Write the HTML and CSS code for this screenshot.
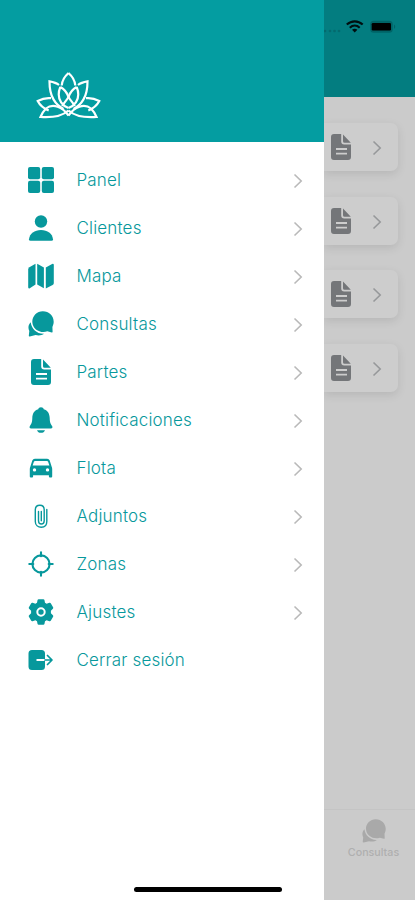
FILE: index.html
```html
<!DOCTYPE html>
<html lang="es">
<head>
<meta charset="utf-8">
<meta name="viewport" content="width=device-width, initial-scale=1">
<title>Menú</title>
<link rel="stylesheet" href="styles.css">
</head>
<body>
<svg class="defs" width="0" height="0" aria-hidden="true">
  <symbol id="chevron" viewBox="0 0 10 16"><path d="M1.500 1.500 8.200 8 1.500 14.500" fill="none" stroke="currentColor" stroke-width="1.600"/></symbol>
  <symbol id="doc" viewBox="0 0 26 26"><path fill="currentColor" fill-rule="evenodd" d="M6 0h7.200v7.500q0 3 3 3H23v12.500a3 3 0 0 1-3 3H6a3 3 0 0 1-3-3V3a3 3 0 0 1 3-3ZM8 14v1.900h11V14ZM8 18.700v1.900h11v-1.900ZM15 .6l7.800 8.200H16.500Q15 8.800 15 7.300Z"/></symbol>
  <symbol id="chat" viewBox="0 0 26 26"><path fill="currentColor" d="M14.800.3C21 .3 25.700 5 25.700 10.700c0 2.200-.7 3.600-1.300 5.200l.2 4.900q0 .8-.8.600l-4.500-1.200c-6 2.500-14.600-1.400-15-9.300C4.200 5 9 .3 14.800.3Z"/><path fill="currentColor" d="M2.700 11.200c.7 6.800 6.500 11.900 13.400 11.500-2.400 1.700-5.500 2.100-8.500 1.300l-5.800 1.500q-1 .2-1-.8l.5-4.700C-.2 16.900.3 13.700 2.700 11.200Z"/></symbol>
  <symbol id="petals" viewBox="0 0 33 50"><g fill="none" stroke="#fff" stroke-width="2.200">
    <path d="M32.500 3c-4 3.500-6.500 8-6.800 12.500"/>
    <path d="M23 15c-2-1.600-5-2.800-9.500-3.600 0 7 .8 12.500 4 18 2.500 4.500 6 7.500 10 9.500"/>
    <path d="M24.300 17c-2 5-2 11 .8 15.300 1.800 2.700 4.400 4.500 7.400 5.700M24.300 17c4 2.200 7 6 8.200 10.500"/>
    <path d="M32.500 27c-1.600 3-4.200 5.500-6.400 9"/>
    <path d="M15 28.200C10 27.600 6 28.700 1.700 31c2.200 4.200 6 7.500 11 9.500"/>
    <path d="M10 38.500C7.500 41 6 43.500 4.500 47c10 .7 21-.3 28-6.500"/>
    <path d="M10 38.500c7-5.500 16.500-1.500 22.500 7"/>
  </g></symbol>
</svg>
<div class="screen">
  <nav class="drawer">
    <header class="brand">
      <svg width="66" height="50" viewBox="0 0 66 50">
        <use href="#petals" width="33" height="50"/>
        <use href="#petals" width="33" height="50" transform="translate(65 0) scale(-1 1)"/>
      </svg>
    </header>
    <ul class="menu">
      <li><svg class="icon" viewBox="0 0 26 26"><g fill="currentColor"><rect width="12.200" height="12.200" rx="2"/><rect x="13.800" width="12.200" height="12.200" rx="2"/><rect y="13.800" width="12.200" height="12.200" rx="2"/><rect x="13.800" y="13.800" width="12.200" height="12.200" rx="2"/></g></svg><span>Panel</span><svg class="chevron"><use href="#chevron"/></svg></li>
      <li><svg class="icon" viewBox="0 0 26 26"><circle cx="13" cy="6.500" r="6.200" fill="currentColor"/><path fill="currentColor" d="M1 24.200C1.700 18.500 6.500 15 13 15s11.300 3.500 12 9.200q.1 1.600-1.500 1.600h-21Q.9 25.800 1 24.200Z"/></svg><span>Clientes</span><svg class="chevron"><use href="#chevron"/></svg></li>
      <li><svg class="icon" viewBox="0 0 26 26"><g fill="currentColor"><path d="M7.500.8v20.700L1.800 25.200Q.2 26 .2 24.300V6.500q0-1.500 1.200-2.200Z"/><path d="M9.200.8l6.700 3.700v20.700l-6.700-3.700Z"/><path d="M17.800 4.500l6.300-3.600q1.700-.6 1.700 1v18q0 1.300-1.200 2l-6.800 3.500Z"/></g></svg><span>Mapa</span><svg class="chevron"><use href="#chevron"/></svg></li>
      <li><svg class="icon"><use href="#chat"/></svg><span>Consultas</span><svg class="chevron"><use href="#chevron"/></svg></li>
      <li><svg class="icon"><use href="#doc"/></svg><span>Partes</span><svg class="chevron"><use href="#chevron"/></svg></li>
      <li><svg class="icon" viewBox="0 0 26 26"><path fill="currentColor" d="M13 .3c1.500 0 2.400.7 2.700 1.900C20 3.300 21.600 7 21.700 11c.1 4.500 1 6.200 2.400 8 .8 1.200.2 2.600-1.200 2.600H3.100c-1.400 0-2-1.400-1.200-2.600 1.400-1.800 2.300-3.500 2.400-8C4.400 7 6 3.300 10.300 2.200 10.600 1 11.500.3 13 .3ZM9 23.200h8c-.5 1.700-2 2.600-4 2.600s-3.500-.9-4-2.600Z"/></svg><span>Notificaciones</span><svg class="chevron"><use href="#chevron"/></svg></li>
      <li><svg class="icon" viewBox="0 0 26 26"><path fill="currentColor" fill-rule="evenodd" d="M6.800 3.800h12.400q1.800 0 2.500 1.700l1.900 6q.6 1.200.6 2.500v7.500q0 1-1 1h-1.300q-1 0-1-1v-1.300H5.100v1.300q0 1-1 1H2.800q-1 0-1-1V14q0-1.300.6-2.500l1.900-6Q5 3.800 6.800 3.800ZM7 5.900q-.8 0-1.100.8L4.600 10.500h16.800l-1.300-3.800q-.3-.8-1.100-.8ZM6.500 13.200a1.700 1.700 0 1 0 0 3.400 1.700 1.700 0 0 0 0-3.400ZM19.500 13.200a1.700 1.700 0 1 0 0 3.400 1.700 1.700 0 0 0 0-3.400Z"/></svg><span>Flota</span><svg class="chevron"><use href="#chevron"/></svg></li>
      <li><svg class="icon" viewBox="0 0 26 26"><path fill="none" stroke="currentColor" stroke-width="1.400" stroke-linecap="round" d="M18.800 6.500v12c0 3.700-2.300 5.800-5.500 5.800s-6-2.100-6-5.800V7c0-3 1.900-4.700 4.600-4.700S16.200 4 16.200 7v10.800c0 2-1.100 3.200-2.900 3.200s-2.800-1.200-2.800-3.200V8.500M13.300 8.500v9.200"/></svg><span>Adjuntos</span><svg class="chevron"><use href="#chevron"/></svg></li>
      <li><svg class="icon" viewBox="0 0 26 26"><g fill="none" stroke="currentColor" stroke-width="2.100" stroke-linecap="round"><circle cx="13" cy="13" r="8.600"/><path d="M13 1.300v4M13 20.700v4M1.300 13h4M20.700 13h4"/></g></svg><span>Zonas</span><svg class="chevron"><use href="#chevron"/></svg></li>
      <li><svg class="icon" viewBox="0 0 26 26"><path fill="currentColor" fill-rule="evenodd" d="M10.700.2h4.600q1 0 1.200 1l.5 2.500 1.600 1 2.800-.9q1-.3 1.500.6l2.200 3.800q.5.900-.2 1.600l-2 1.900v2.600l2 1.900q.7.700.2 1.600l-2.200 3.800q-.5.900-1.500.6l-2.800-.9-1.600 1-.5 2.500q-.2 1-1.200 1h-4.600q-1 0-1.200-1L9 22.300l-1.600-1-2.800.9q-1 .3-1.500-.6L.9 17.800q-.5-.9.200-1.600l2-1.900v-2.600l-2-1.900Q.4 9.100.9 8.200l2.200-3.800q.5-.9 1.500-.6l2.800.9 1.600-1 .5-2.500q.2-1 1.200-1ZM13 8.300a4.700 4.700 0 1 0 0 9.400 4.700 4.700 0 0 0 0-9.400Z"/><circle cx="13" cy="13" r="2.700" fill="currentColor"/></svg><span>Ajustes</span><svg class="chevron"><use href="#chevron"/></svg></li>
      <li><svg class="icon" viewBox="0 0 26 26"><path fill="currentColor" d="M4 3h9.500A3.500 3.500 0 0 1 17 6.500v5.600H8.500v1.800H17v5.600a3.500 3.500 0 0 1-3.500 3.500H4a3.500 3.500 0 0 1-3.500-3.500v-13A3.500 3.500 0 0 1 4 3Z"/><path d="M17 13h6.700M19.500 8.500 24 13l-4.500 4.500" fill="none" stroke="currentColor" stroke-width="1.700" stroke-linecap="round" stroke-linejoin="round"/></svg><span>Cerrar sesión</span></li>
    </ul>
  </nav>
  <main class="page">
    <div class="topbar">
      <svg width="91" height="40" viewBox="0 0 91 40">
        <g fill="#046a6d"><circle cx="1" cy="31" r="1.300"/><circle cx="6" cy="31" r="1.300"/><circle cx="10.500" cy="31" r="1.300"/><circle cx="15" cy="31" r="1.300"/></g>
        <g fill="none" stroke="#000f10" stroke-width="2.200"><path d="M22.800 24.500c4.700-4.300 11.200-4.300 15.900 0M25.800 27.700c3-2.700 6.900-2.700 9.900 0"/></g>
        <path fill="#000f10" d="M28 29.800q2.700-2 5.400 0L30.700 32.600Z"/>
        <rect x="46.200" y="20.700" width="22.500" height="12" rx="3.500" fill="#006467"/><path d="M70 24.500q2.500 2.200 0 4.400Z" fill="#006467"/>
        <rect x="47.700" y="22.900" width="19.300" height="7.700" rx="1.300" fill="#000"/>
      </svg>
    </div>
    <div class="cards">
      <div class="card"><svg class="file"><use href="#doc"/></svg><svg class="go"><use href="#chevron"/></svg></div>
      <div class="card"><svg class="file"><use href="#doc"/></svg><svg class="go"><use href="#chevron"/></svg></div>
      <div class="card"><svg class="file"><use href="#doc"/></svg><svg class="go"><use href="#chevron"/></svg></div>
      <div class="card"><svg class="file"><use href="#doc"/></svg><svg class="go"><use href="#chevron"/></svg></div>
    </div>
    <div class="tab"><svg class="tabicon"><use href="#chat"/></svg><span>Consultas</span></div>
  </main>
  <div class="home"></div>
</div>
</body>
</html>
```
FILE: styles.css
```css
* { box-sizing: border-box; }
body { margin: 0; font-family: Inter, "Liberation Sans", sans-serif; }
.defs { display: block; }
.screen { position: relative; display: grid; grid-template-columns: 324px 1fr; height: 900px; overflow: hidden; }
.drawer { background: #fff; }
.brand { height: 142px; padding: 70px 0 0 36px; background: #049da1; }
.brand svg { display: block; }
.menu { list-style: none; margin: 0; padding: 14px 21px 0 27.500px; color: #07989c; }
.menu li { display: flex; align-items: center; height: 48px; font-size: 17px; font-weight: 300; letter-spacing: .17px; }
.menu span { flex: 1; padding-left: 23px; }
.icon { width: 26px; height: 26px; flex: none; }
.chevron { width: 10px; height: 16px; color: #b9b9b9; position: relative; top: 1px; }
.page { display: flex; flex-direction: column; background: #cbcbcb; overflow: hidden; }
.topbar { height: 97px; flex: none; background: #037d80; }
.topbar svg { display: block; }
.cards { flex: 1; display: flex; flex-direction: column; gap: 25.500px; padding: 26px 17px 0 0; }
.card { display: flex; align-items: center; justify-content: space-between; height: 48px; padding: 0 16px 0 4px; background: #cdcdcd; border-radius: 0 7px 7px 0; box-shadow: 0 3px 10px rgba(0,0,0,.1); }
.file { width: 26px; height: 26px; color: #747679; }
.go { width: 10px; height: 16px; color: #96989a; position: relative; top: 1px; }
.tab { height: 91px; flex: none; border-top: 1px solid #c4c4c4; padding: 9px 0 0 8px; display: flex; flex-direction: column; align-items: center; color: #afafaf; font-size: 10.700px; font-weight: 500; }
.tabicon { width: 24px; height: 24px; margin-bottom: 3px; color: #a9a9a9; }
.home { position: absolute; left: 134px; top: 886.500px; width: 148px; height: 5px; border-radius: 3px; background: #000; }
```
